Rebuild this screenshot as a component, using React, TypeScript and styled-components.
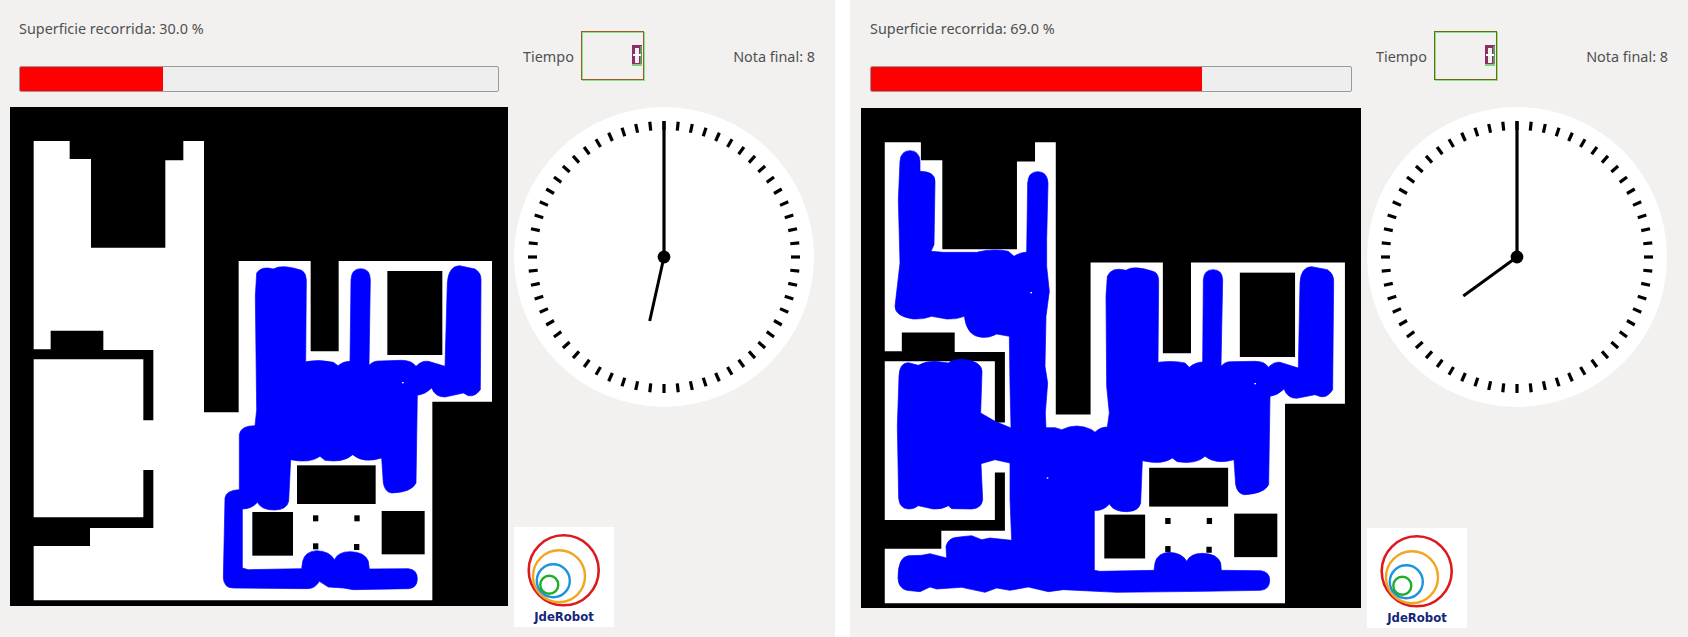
import React from "react";
import styled, { createGlobalStyle } from "styled-components";

const GlobalStyle = createGlobalStyle`
  html, body {
    margin: 0;
    padding: 0;
    background: #ffffff;
    overflow: hidden;
  }
`;

// outline of the floor, same building on both maps
const FLOOR =
  "M101 124H209V178H273V444H496V182H550V124H612V938H716V484H932V755H1016V484H1476V906H1297V1502H101V1339H270V1285H460V1111H430V1253H101V779H430V962H460V751H310V693H152V749H101Z";

const FURNITURE = [
  [1162, 514, 165, 252],
  [891, 1097, 236, 116],
  [757, 1237, 122, 131],
  [1145, 1234, 129, 130],
  [939, 1247, 16, 18],
  [1063, 1247, 16, 18],
  [939, 1331, 16, 18],
  [1062, 1333, 16, 18],
];

const TRAIL_LEFT =
  "M766 590L770 520Q785 498 820 508Q845 492 905 512Q918 520 919 540L917 786Q960 778 1000 788L1014 798Q1030 785 1050 785L1053 540Q1055 507 1082 507Q1110 507 1111 540L1107 797Q1120 783 1140 784L1205 782Q1235 782 1248 800Q1265 782 1285 785L1335 800L1342 550Q1345 500 1378 498L1425 508Q1445 520 1443 545L1441 870Q1425 892 1405 888L1390 880L1335 892Q1305 892 1295 865Q1275 885 1252 887L1248 1150Q1235 1178 1175 1180Q1155 1178 1150 1150L1145 1075Q1090 1092 1058 1065Q1030 1090 975 1082L960 1070Q930 1092 872 1080L866 1205Q860 1230 825 1231Q785 1232 772 1208Q755 1228 727 1228V1405L745 1410L905 1407L908 1385Q915 1355 950 1353Q990 1355 1003 1380Q1015 1356 1050 1356Q1095 1357 1105 1385L1108 1408L1225 1407Q1252 1410 1252 1437Q1252 1465 1225 1467L1060 1470L1030 1465L985 1462L958 1445Q945 1468 920 1467L700 1465Q672 1465 670 1435L675 1195Q678 1172 718 1170V1005Q722 978 765 978L770 930Z";

const TRAIL_RIGHT =
  "M150 185Q152 153 180 153Q208 153 210 185V215Q255 215 255 245L252 435L243 455L280 458H380Q430 445 475 455L492 470Q510 458 530 457L533 250Q535 216 563 216Q592 216 594 250L590 420V500L598 575L588 650L585 800L593 850L586 940L588 984H615L635 990Q680 968 725 990L735 998Q750 982 772 982L778 940L770 860L768 590L772 530Q785 500 828 512Q850 495 912 516Q926 522 926 545L924 788Q970 782 1005 790L1018 803Q1035 788 1058 787L1060 540Q1062 510 1089 510Q1117 510 1118 540L1113 800Q1125 785 1145 786L1215 785Q1245 785 1255 803Q1272 785 1290 788L1345 805L1350 550Q1352 502 1385 501L1432 510Q1452 522 1451 548L1448 870Q1432 895 1412 891L1395 885L1340 896Q1312 896 1302 868Q1282 888 1260 890L1256 1155Q1242 1182 1183 1185Q1162 1182 1157 1155L1152 1080Q1098 1096 1065 1070Q1038 1095 982 1086L967 1075Q937 1097 877 1083L872 1210Q866 1235 832 1236Q792 1237 778 1213Q762 1233 733 1233V1412L750 1415L912 1412L915 1390Q922 1360 957 1358Q997 1360 1010 1385Q1022 1361 1057 1361Q1102 1362 1112 1390L1114 1412L1232 1413Q1259 1416 1259 1442Q1259 1470 1232 1472L1060 1475L800 1478L640 1470L595 1476L535 1462L480 1472L440 1465L405 1478L335 1463L260 1468L240 1462L210 1476L170 1472Q145 1465 144 1435Q144 1372 175 1368L215 1367L240 1362L290 1375L288 1340Q295 1315 320 1313L365 1308L395 1320L420 1315L485 1322L480 1200V1090L435 1080L393 1092L398 1200Q395 1226 365 1228L305 1227L295 1218Q275 1230 250 1228L205 1218Q190 1230 175 1228Q148 1226 146 1195L142 980L147 830Q148 790 175 789L205 797Q225 785 255 785L295 790Q310 778 340 779Q395 785 396 815L392 940L435 965L483 985L480 860L478 710L440 703Q420 715 395 713Q350 710 343 650Q320 660 290 658L245 650Q220 660 190 658Q135 650 135 620L150 490L145 300Z";

type PaneData = {
  percent: string;
  fill: number;
  grade: number;
  paddingLeft: number;
  width: number;
  mapWidth: number;
  mapHeight: number;
  mapGap: number;
  logoGap: number;
  viewBox: string;
  floorTransform?: string;
  trail: string;
  specks: number[][];
  hourEnd: [number, number];
  lcdColor: string;
};

const panes: PaneData[] = [
  {
    percent: "30.0",
    fill: 30,
    grade: 8,
    paddingLeft: 10,
    width: 835,
    mapWidth: 498,
    mapHeight: 499,
    mapGap: 15,
    logoGap: 120,
    viewBox: "30 22 1494 1497",
    trail: TRAIL_LEFT,
    specks: [[1206, 847]],
    hourEnd: [-14.3, 64],
    lcdColor: "#94602a",
  },
  {
    percent: "69.0",
    fill: 69,
    grade: 8,
    paddingLeft: 11,
    width: 838,
    mapWidth: 500,
    mapHeight: 500,
    mapGap: 16,
    logoGap: 121,
    viewBox: "33 25 1500 1500",
    floorTransform: "translate(33 25) scale(1.004) translate(-30 -22)",
    trail: TRAIL_RIGHT,
    specks: [
      [541, 577],
      [590, 1133],
      [1213, 850],
    ],
    hourEnd: [-53.7, 39],
    lcdColor: "#6a6a14",
  },
];

const Page = styled.div`
  display: flex;
  gap: 15px;
  width: 1688px;
  height: 637px;
  background: #ffffff;
  font-family: "Noto Sans", "Open Sans", sans-serif;
  font-size: 14.4px;
  color: #505050;
`;

const Pane = styled.section<{ $width: number; $paddingLeft: number }>`
  display: flex;
  gap: 6px;
  box-sizing: border-box;
  width: ${(p) => p.$width}px;
  height: 100%;
  padding-left: ${(p) => p.$paddingLeft}px;
  background: #f2f1f0;
`;

const MainColumn = styled.div`
  display: flex;
  flex-direction: column;
`;

const Header = styled.div`
  display: flex;
  flex-direction: column;
  padding: 18px 9px 0;
`;

const Label = styled.span`
  height: 22px;
  line-height: 22px;
  white-space: nowrap;
`;

const Track = styled.div`
  box-sizing: border-box;
  height: 26px;
  margin-top: 26px;
  border: 1px solid #9a9a9a;
  border-radius: 2px;
  background: #eeeeee;
  overflow: hidden;
`;

const Fill = styled.div`
  height: 100%;
  background: #ff0000;
`;

const MapFrame = styled.svg<{ $gap: number }>`
  display: block;
  margin-top: ${(p) => p.$gap}px;
  background: #000000;
`;

const SideColumn = styled.div`
  display: flex;
  flex-direction: column;
  width: 301px;
  padding-top: 31px;
`;

const TimerRow = styled.div`
  display: flex;
  align-items: center;
  height: 49px;
  padding-left: 9px;
`;

const TimerLabel = styled.span`
  width: 58px;
  padding-top: 1px;
`;

const Lcd = styled.div<{ $color: string }>`
  display: flex;
  align-items: center;
  justify-content: flex-end;
  box-sizing: border-box;
  width: 63px;
  height: 49px;
  padding-right: 1px;
  border: 1px solid ${(p) => p.$color};
  box-shadow:
    inset 1px 1px 0 #8fe088,
    1px 1px 0 #8fe088;
`;

const Grade = styled.span`
  margin-left: auto;
  padding-top: 1px;
  white-space: nowrap;
`;

const ClockFace = styled.svg`
  display: block;
  margin-top: 27px;
`;

const LogoBox = styled.svg<{ $gap: number }>`
  display: block;
  margin-top: ${(p) => p.$gap}px;
  background: #ffffff;
`;

const LogoText = styled.text`
  font-family: "DejaVu Sans", sans-serif;
  font-size: 11.7px;
  font-weight: 700;
  fill: #14267a;
`;

const Digit = () => (
  <svg width="10" height="21" viewBox="0 0 10 21">
    <rect x="0" y="0" width="10" height="21" fill="#8c2f68" />
    <rect x="8" y="1" width="2" height="20" fill="#5f9a5a" />
    <rect x="0" y="19" width="10" height="2" fill="#7fd07f" />
    <rect x="3" y="3" width="4" height="15" fill="#f2f1f0" />
    <rect x="1" y="9" width="8" height="2" fill="#ffffff" />
  </svg>
);

const Clock = ({ hourEnd }: { hourEnd: [number, number] }) => (
  <ClockFace width="300" height="300" viewBox="0 0 300 300">
    <circle cx="150" cy="150" r="150" fill="#ffffff" />
    {Array.from({ length: 60 }, (_, i) => (
      <line
        key={i}
        x1="150"
        y1="14"
        x2="150"
        y2="23"
        stroke="#000000"
        strokeWidth="3.2"
        transform={`rotate(${i * 6} 150 150)`}
      />
    ))}
    <line x1="150" y1="150" x2="150" y2="14" stroke="#000000" strokeWidth="3.2" />
    <line
      x1="150"
      y1="150"
      x2={150 + hourEnd[0]}
      y2={150 + hourEnd[1]}
      stroke="#000000"
      strokeWidth="3"
    />
    <circle cx="150" cy="150" r="6.4" fill="#000000" />
  </ClockFace>
);

const Logo = ({ gap }: { gap: number }) => (
  <LogoBox $gap={gap} width="100" height="100" viewBox="0 0 100 100">
    <g fill="none" strokeWidth="2.4">
      <circle cx="49.7" cy="43.3" r="35" stroke="#dc1a1e" strokeWidth="2.6" />
      <circle cx="45" cy="49.3" r="26" stroke="#f0a620" />
      <circle cx="39.3" cy="53.7" r="16.5" stroke="#1b95dd" />
      <circle cx="35.3" cy="57.7" r="9" stroke="#1fae2a" />
    </g>
    <LogoText x="50" y="94" textAnchor="middle">
      JdeRobot
    </LogoText>
  </LogoBox>
);

const CoverageMap = ({ pane }: { pane: PaneData }) => (
  <MapFrame
    $gap={pane.mapGap}
    width={pane.mapWidth}
    height={pane.mapHeight}
    viewBox={pane.viewBox}
    preserveAspectRatio="none"
  >
    <g transform={pane.floorTransform}>
      <path d={FLOOR} fill="#ffffff" />
      {FURNITURE.map(([x, y, w, h]) => (
        <rect key={`${x}-${y}`} x={x} y={y} width={w} height={h} fill="#000000" />
      ))}
    </g>
    <path d={pane.trail} fill="#0000ff" stroke="#0000ff" strokeWidth="2" strokeLinejoin="round" />
    {pane.specks.map(([x, y]) => (
      <rect key={`${x}-${y}`} x={x} y={y} width="5" height="4" fill="#ffffff" />
    ))}
  </MapFrame>
);

export default function App() {
  return (
    <>
      <GlobalStyle />
      <Page>
        {panes.map((pane) => (
          <Pane key={pane.percent} $width={pane.width} $paddingLeft={pane.paddingLeft}>
            <MainColumn>
              <Header>
                <Label>Superficie recorrida: {pane.percent} %</Label>
                <Track>
                  <Fill style={{ width: `${pane.fill}%` }} />
                </Track>
              </Header>
              <CoverageMap pane={pane} />
            </MainColumn>
            <SideColumn>
              <TimerRow>
                <TimerLabel>Tiempo</TimerLabel>
                <Lcd $color={pane.lcdColor}>
                  <Digit />
                </Lcd>
                <Grade>Nota final: {pane.grade}</Grade>
              </TimerRow>
              <Clock hourEnd={pane.hourEnd} />
              <Logo gap={pane.logoGap} />
            </SideColumn>
          </Pane>
        ))}
      </Page>
    </>
  );
}
